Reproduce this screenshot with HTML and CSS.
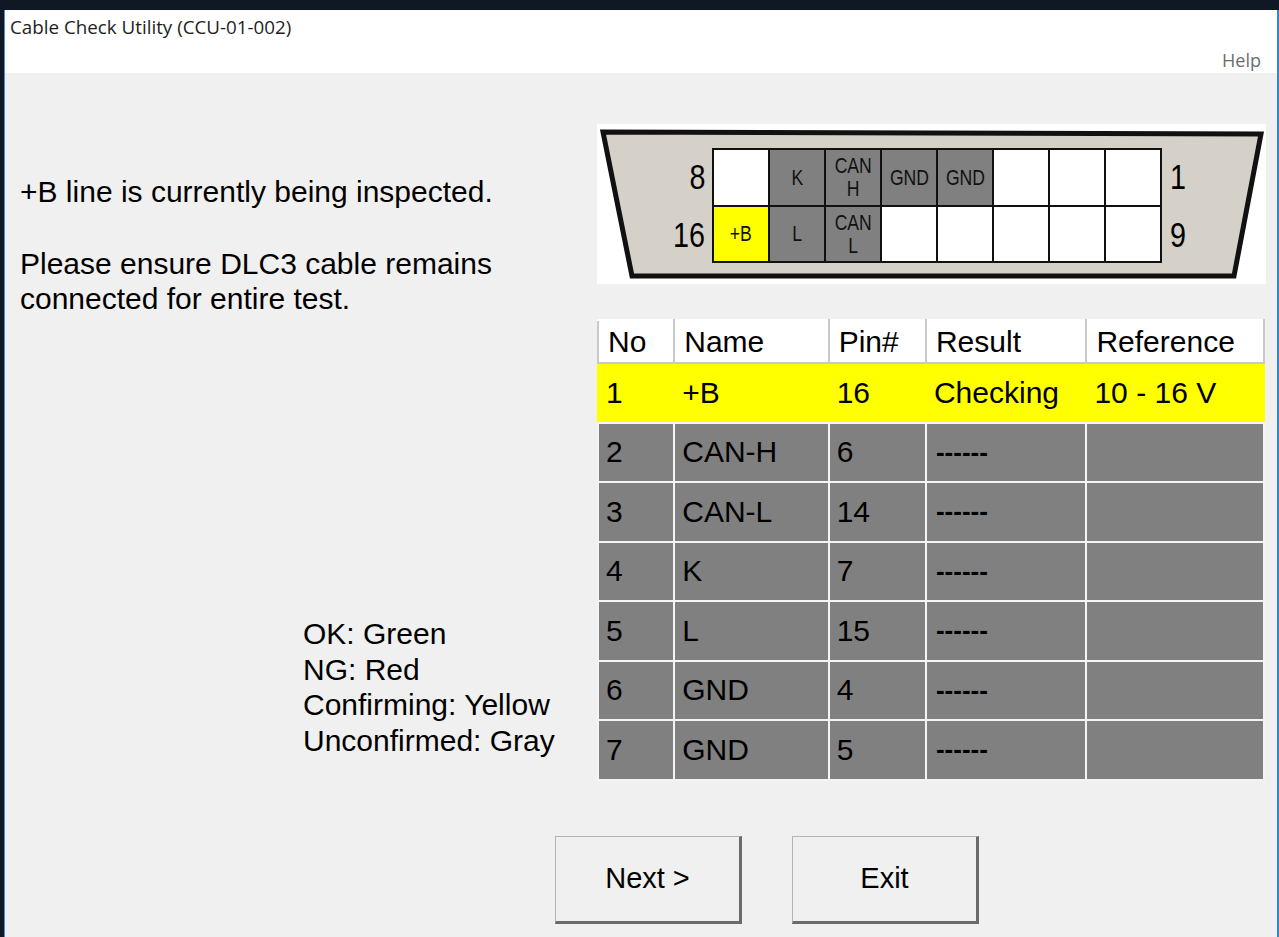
FILE: index.html
```html
<!DOCTYPE html>
<html lang="en">
<head>
    <meta charset="UTF-8">
    <meta name="viewport" content="width=device-width, initial-scale=1.0">
    <title>Cable Check Utility</title>
    <link rel="stylesheet" href="styles.css">
</head>
<body>
    <div class="window">
        <div class="titlebar">Cable Check Utility (CCU-01-002)</div>
        <div class="menubar"><span class="menu-item">Help</span></div>

        <div class="content">
            <div class="main">
                <!-- Left side: instructions and legend -->
                <div class="left-col">
                    <p class="message">+B line is currently being inspected.</p>
                    <p class="message second">Please ensure DLC3 cable remains<br>connected for entire test.</p>
                    <div class="legend">
                        <div>OK: Green</div>
                        <div>NG: Red</div>
                        <div>Confirming: Yellow</div>
                        <div>Unconfirmed: Gray</div>
                    </div>
                </div>

                <!-- Right side: connector diagram and results -->
                <div class="right-col">
                    <div class="connector">
                        <svg class="connector-shape" viewBox="0 0 669 160" width="669" height="160">
                            <polygon points="6,8 664,10 637,152 35,152" fill="#d5d1c9" stroke="#111" stroke-width="5" stroke-linejoin="miter"/>
                        </svg>
                        <div class="pin-area">
                            <div class="pin-labels left">
                                <span><i>8</i></span>
                                <span><i>16</i></span>
                            </div>
                            <div class="pins">
                                <div class="pin"></div>
                                <div class="pin gray"><span>K</span></div>
                                <div class="pin gray"><span>CAN<br>H</span></div>
                                <div class="pin gray"><span>GND</span></div>
                                <div class="pin gray"><span>GND</span></div>
                                <div class="pin"></div>
                                <div class="pin"></div>
                                <div class="pin"></div>

                                <div class="pin yellow"><span>+B</span></div>
                                <div class="pin gray"><span>L</span></div>
                                <div class="pin gray"><span>CAN<br>L</span></div>
                                <div class="pin"></div>
                                <div class="pin"></div>
                                <div class="pin"></div>
                                <div class="pin"></div>
                                <div class="pin"></div>
                            </div>
                            <div class="pin-labels right">
                                <span><i>1</i></span>
                                <span><i>9</i></span>
                            </div>
                        </div>
                    </div>

                    <table class="results">
                        <thead>
                            <tr>
                                <th class="col-no">No</th>
                                <th class="col-name">Name</th>
                                <th class="col-pin">Pin#</th>
                                <th class="col-result">Result</th>
                                <th class="col-ref">Reference</th>
                            </tr>
                        </thead>
                        <tbody>
                            <tr class="checking">
                                <td>1</td><td>+B</td><td>16</td><td>Checking</td><td>10 - 16 V</td>
                            </tr>
                            <tr>
                                <td>2</td><td>CAN-H</td><td>6</td><td class="dash">------</td><td></td>
                            </tr>
                            <tr>
                                <td>3</td><td>CAN-L</td><td>14</td><td class="dash">------</td><td></td>
                            </tr>
                            <tr>
                                <td>4</td><td>K</td><td>7</td><td class="dash">------</td><td></td>
                            </tr>
                            <tr>
                                <td>5</td><td>L</td><td>15</td><td class="dash">------</td><td></td>
                            </tr>
                            <tr>
                                <td>6</td><td>GND</td><td>4</td><td class="dash">------</td><td></td>
                            </tr>
                            <tr>
                                <td>7</td><td>GND</td><td>5</td><td class="dash">------</td><td></td>
                            </tr>
                        </tbody>
                    </table>
                </div>
            </div>

            <div class="buttons">
                <button type="button" class="btn">Next &gt;</button>
                <button type="button" class="btn">Exit</button>
            </div>
        </div>
    </div>
</body>
</html>
```

FILE: styles.css
```css
/* Desktop behind the window */
body {
    margin: 0;
    padding: 0;
    background: #0f1824;
    font-family: 'Liberation Sans', Arial, sans-serif;
    color: #000;
    overflow: hidden;
}

.window {
    margin: 10px 0 0 4px;
    height: 940px;
    border-left: 1px solid #4a8fd0;
    border-right: 2px solid #3b82c4;
    background: #f0f0f0;
}

/* Title and menu */
.titlebar {
    height: 34px;
    line-height: 34px;
    padding-left: 5px;
    background: #fff;
    font-family: 'Open Sans', 'Noto Sans', sans-serif;
    font-size: 18.8px;
    color: #1e1e1e;
}

.menubar {
    height: 29px;
    background: #fff;
    display: flex;
    justify-content: flex-end;
    align-items: center;
    padding: 2px 16px 0 0;
    box-sizing: border-box;
}

    .menu-item {
        font-family: 'Open Sans', 'Noto Sans', sans-serif;
        font-size: 18px;
        color: #6d6d6d;
    }

/* Main area */
.main {
    display: flex;
    align-items: flex-start;
}

.left-col {
    width: 592px;
    padding-left: 15px;
    box-sizing: border-box;
}

.message {
    margin: 101px 0 0;
    font-size: 30px;
    line-height: 35px;
}

    .message.second {
        margin-top: 37px;
    }

.legend {
    margin: 300px 0 0 283px;
    font-size: 30px;
    line-height: 35.5px;
}

.right-col {
    width: 669px;
    padding-top: 51px;
}

/* DLC3 connector */
.connector {
    position: relative;
    width: 669px;
    height: 160px;
    background: #fff;
}

.connector-shape {
    position: absolute;
    left: 0;
    top: 0;
}

.pin-area {
    position: relative;
    display: flex;
    align-items: flex-start;
    padding-top: 24px;
}

.pin-labels {
    display: flex;
    flex-direction: column;
    font-size: 35px;
}

    .pin-labels span {
        height: 57.5px;
        line-height: 57.5px;
    }

    .pin-labels i {
        display: inline-block;
        font-style: normal;
        transform: scaleX(0.82);
    }

    .pin-labels.left {
        width: 108px;
        padding-right: 7px;
        text-align: right;
    }

        .pin-labels.left i {
            transform-origin: right center;
        }

    .pin-labels.right {
        padding-left: 8px;
    }

        .pin-labels.right i {
            transform-origin: left center;
        }

.pins {
    display: grid;
    grid-template-columns: repeat(8, 54px);
    grid-template-rows: repeat(2, 54.5px);
    gap: 2px;
    padding: 2px;
    background: #111;
}

.pin {
    background: #fff;
    display: flex;
    align-items: center;
    justify-content: center;
    text-align: center;
    font-size: 22px;
    line-height: 23px;
    color: #111;
}

    .pin span {
        display: inline-block;
        transform: scaleX(0.8);
    }

    .pin.gray {
        background: #808080;
    }

    .pin.yellow {
        background: #ffff00;
    }

/* Results table */
.results {
    margin-top: 35px;
    width: 668px;
    border-collapse: collapse;
    border-style: solid;
    border-width: 2px;
    border-color: #8a8a8a #fff #fff #8a8a8a;
    font-size: 30px;
    table-layout: fixed;
}

    .results th,
    .results td {
        box-sizing: border-box;
        text-align: left;
    }

    .results th {
        height: 43px;
        padding: 0 0 0 9px;
        background: #fff;
        font-weight: normal;
        border: 2px solid #c9c9c9;
        border-top-color: #fff;
    }

    .results td {
        height: 59.5px;
        padding: 0 0 0 7px;
        background: #808080;
        border: 2px solid #f4f4f4;
    }

    .results tr.checking td {
        background: #ffff00;
        border-color: #ffff00;
        border-bottom-color: #f4f4f4;
    }

    .results td.dash {
        font-weight: bold;
        font-size: 26px;
        padding-left: 9px;
    }

.col-no { width: 76px; }
.col-name { width: 154px; }
.col-pin { width: 97px; }
.col-result { width: 160px; }
.col-ref { width: 177px; }

/* Bottom buttons */
.buttons {
    display: flex;
    gap: 50px;
    padding-left: 550px;
    margin-top: 55px;
}

.btn {
    width: 187px;
    height: 88px;
    background: #f0f0f0;
    border-style: solid;
    border-width: 1px 3px 3px 1px;
    border-color: #b4b4b4 #6b6b6b #6b6b6b #b4b4b4;
    font-family: 'Liberation Sans', Arial, sans-serif;
    font-size: 29px;
    color: #000;
    padding: 0;
}
```
